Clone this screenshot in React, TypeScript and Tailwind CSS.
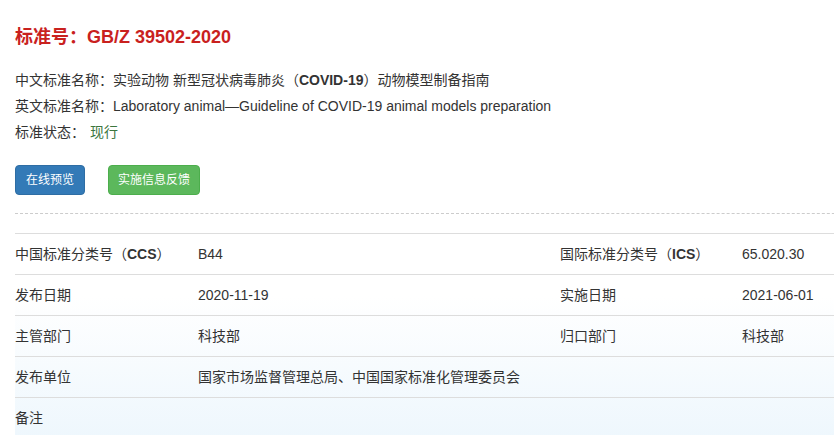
import React from "react";

const font = { fontFamily: '"Liberation Sans", "Noto Sans CJK SC", sans-serif' };

type Row = {
  label: React.ReactNode;
  value: string;
  label2?: React.ReactNode;
  value2?: string;
};

const rows: Row[] = [
  {
    label: (
      <>
        中国标准分类号（<b>CCS</b>）
      </>
    ),
    value: "B44",
    label2: (
      <>
        国际标准分类号（<b>ICS</b>）
      </>
    ),
    value2: "65.020.30",
  },
  { label: "发布日期", value: "2020-11-19", label2: "实施日期", value2: "2021-06-01" },
  { label: "主管部门", value: "科技部", label2: "归口部门", value2: "科技部" },
  { label: "发布单位", value: "国家市场监督管理总局、中国国家标准化管理委员会" },
  { label: "备注", value: "" },
];

export default function App() {
  return (
    <div
      className="w-[834px] h-[435px] overflow-hidden bg-white text-[#333] text-[14px]"
      style={font}
    >
      <div className="pl-[15px] w-[900px]">
        <h1 className="pt-[26px] text-[18px] leading-[22px] font-bold text-[#c9211e]">
          标准号：GB/Z 39502-2020
        </h1>

        <div className="mt-[19px] flex flex-col">
          <p className="leading-[26px]">
            中文标准名称：实验动物 新型冠状病毒肺炎（<b>COVID-19</b>）动物模型制备指南
          </p>
          <p className="leading-[26px]">
            英文标准名称：Laboratory animal—Guideline of COVID-19 animal models preparation
          </p>
          <p className="leading-[26px]">
            标准状态：<span className="ml-[5px] text-[#3c763d]">现行</span>
          </p>
        </div>

        <div className="mt-[20px] flex gap-[23px]">
          <button className="h-[30px] px-[10px] text-[12px] text-white bg-[#337ab7] border border-[#2e6da4] rounded-[4px] flex items-center">
            在线预览
          </button>
          <button className="h-[30px] px-[9px] text-[12px] text-white bg-[#5cb85c] border border-[#4cae4c] rounded-[4px] flex items-center">
            实施信息反馈
          </button>
        </div>

        <div className="mt-[18px] border-t border-dashed border-[#ccc]" />

        <div className="mt-[19px] border-t border-[#ddd] bg-gradient-to-b from-white from-30% to-[#eef7fd]">
          {rows.map((r, i) => (
            <div key={i} className="h-[41px] flex items-center border-b border-[#ddd]">
              <div className="w-[183px]">{r.label}</div>
              <div className="w-[362px]">{r.value}</div>
              <div className="w-[182px]">{r.label2}</div>
              <div className="flex-1">{r.value2}</div>
            </div>
          ))}
        </div>
      </div>
    </div>
  );
}
